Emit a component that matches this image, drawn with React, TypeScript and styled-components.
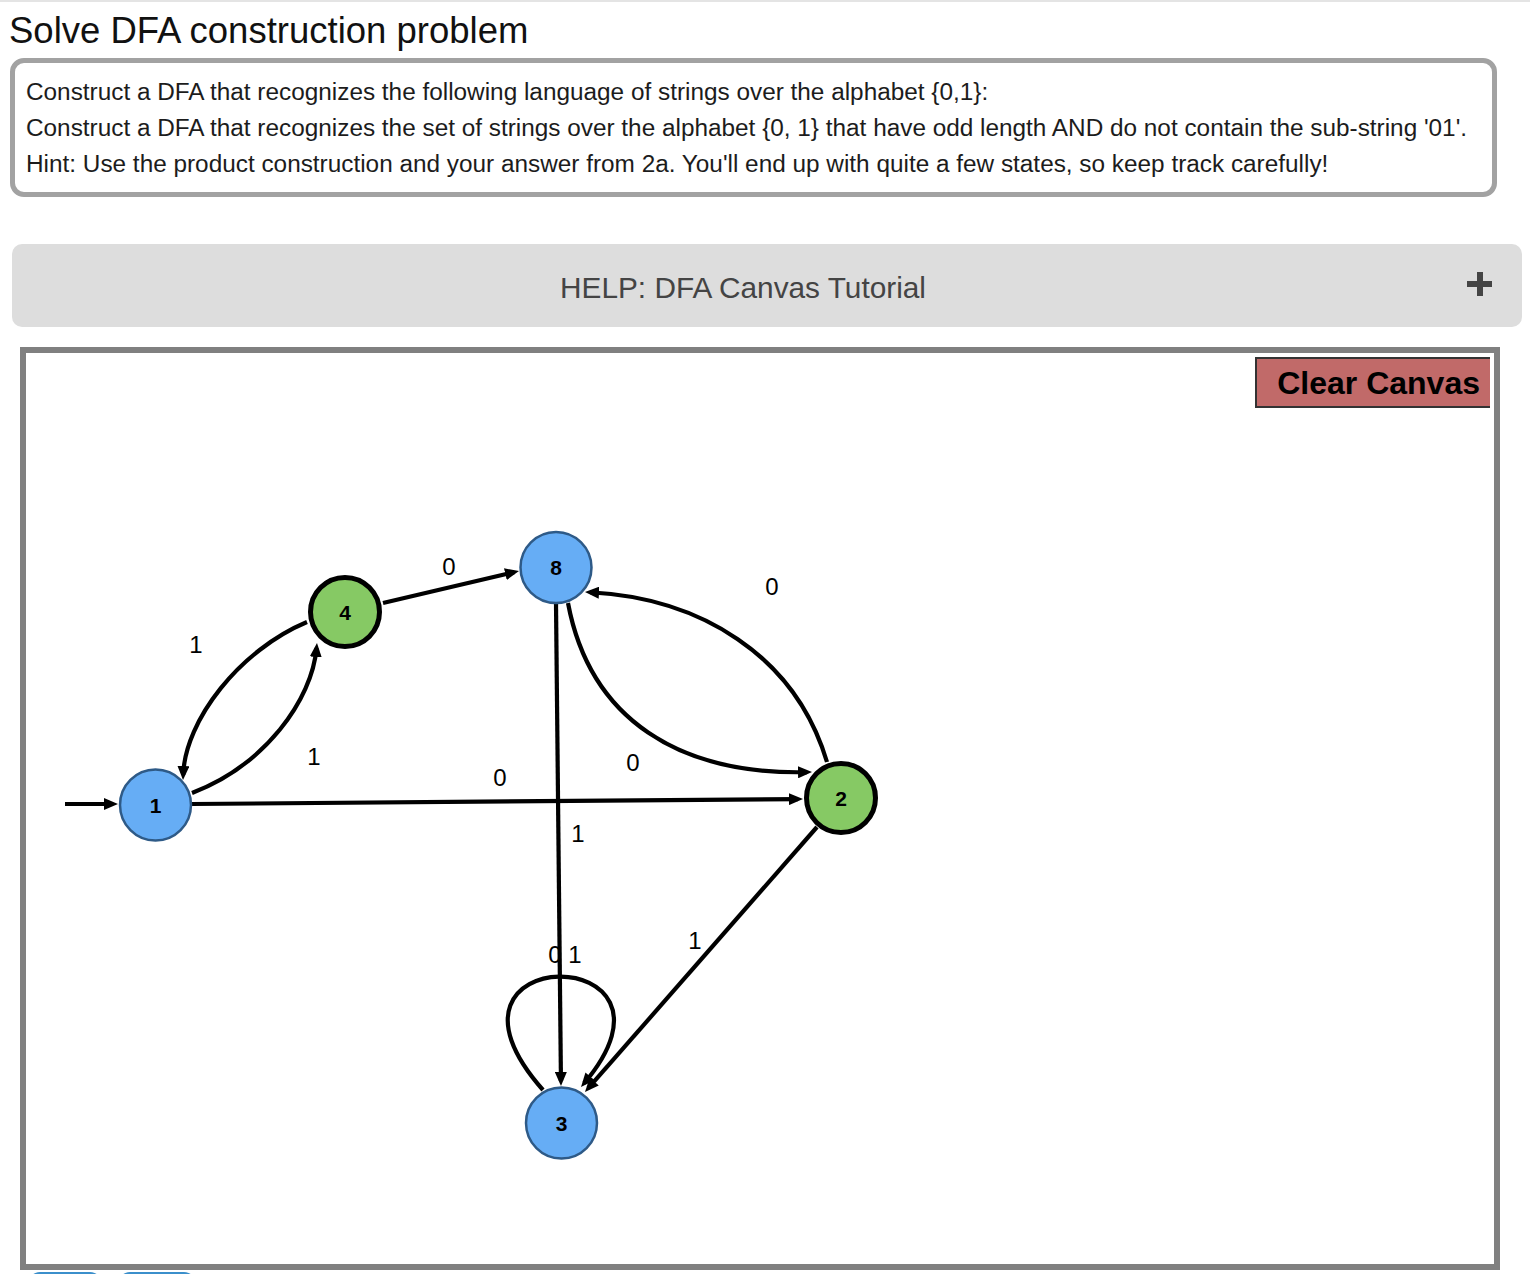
import React from 'react';
import styled, { createGlobalStyle } from 'styled-components';

const GlobalStyle = createGlobalStyle`
  html, body { margin: 0; padding: 0; background: #fff; }
  body { font-family: "Liberation Sans", Arial, Helvetica, sans-serif; color: #1a1a1a; }
`;

const Page = styled.div`
  width: 1530px;
  border-top: 2px solid #e4e4e4;
  box-sizing: border-box;
`;

const Title = styled.h2`
  margin: 8px 0 0 9px;
  font-size: 36.5px;
  font-weight: normal;
  line-height: 41px;
  color: #111;
`;

const ProblemBox = styled.div`
  margin: 7px 33px 0 10px;
  border: 5px solid #a2a2a2;
  border-radius: 14px;
  padding: 11px 12px 10px 11px;
  font-size: 24.35px;
  line-height: 36px;
  color: #1c1c1c;
`;

const ProblemLine = styled.div`
  white-space: nowrap;
`;

const HelpBar = styled.div`
  margin: 47px 8px 0 12px;
  height: 83px;
  background: #dddddd;
  border-radius: 10px;
  display: flex;
  align-items: center;
  padding-left: 7px;
`;

const HelpTitle = styled.div`
  flex: 1;
  text-align: center;
  font-size: 29.8px;
  margin-top: 5px;
  color: #444;
`;

const PlusIcon = styled.span`
  position: relative;
  width: 25px;
  height: 24px;
  margin: -3px 30px 0 0;
  &::before, &::after {
    content: '';
    position: absolute;
    background: #444;
  }
  &::before { left: 0; right: 0; top: 9px; height: 6px; }
  &::after { top: 0; bottom: 0; left: 10px; width: 6px; }
`;

const Canvas = styled.div`
  position: relative;
  margin: 20px 30px 0 20px;
  height: 923px;
  box-sizing: border-box;
  border: 6px solid #808080;
  background: #fff;
`;

const Drawing = styled.svg`
  display: block;
  width: 100%;
  height: 100%;
`;

const ClearButton = styled.button`
  position: absolute;
  top: 4px;
  right: 4px;
  height: 51px;
  box-sizing: border-box;
  border: 2px solid #333;
  border-right: none;
  background: #c16a69;
  color: #000;
  font-family: "Liberation Sans", Arial, sans-serif;
  font-weight: bold;
  font-size: 32px;
  padding: 0 10px 0 20px;
  line-height: 1;
`;

const ButtonRow = styled.div`
  display: flex;
  gap: 16px;
  margin: 2px 0 0 28px;
`;

const SmallButton = styled.button<{ $w: number }>`
  width: ${(p) => p.$w}px;
  height: 40px;
  border: none;
  border-radius: 12px;
  background: #3b8fcb;
`;

const EdgePath = styled.path`
  fill: none;
  stroke: #000;
  stroke-width: 4.2;
`;

const StateCircle = styled.circle<{ $accept: boolean }>`
  fill: ${(p) => (p.$accept ? '#86c964' : '#66adf5')};
  stroke: ${(p) => (p.$accept ? '#000' : '#2e5a87')};
  stroke-width: ${(p) => (p.$accept ? 5 : 2.5)};
`;

const StateLabel = styled.text`
  font-family: "Liberation Sans", Arial, sans-serif;
  font-weight: bold;
  font-size: 21px;
  fill: #000;
`;

const EdgeLabel = styled.text`
  font-family: "Liberation Sans", Arial, sans-serif;
  font-size: 24px;
  fill: #000;
`;

type Pt = [number, number];

const shorten = (end: Pt, from: Pt, d: number): Pt => {
  const dx = end[0] - from[0];
  const dy = end[1] - from[1];
  const L = Math.hypot(dx, dy);
  return [end[0] - (dx / L) * d, end[1] - (dy / L) * d];
};

const edgePath = (pts: Pt[], arrow: boolean): string => {
  const last = pts[pts.length - 1];
  const prev = pts[pts.length - 2];
  const end = arrow ? shorten(last, prev, 5) : last;
  const p = [...pts.slice(0, -1), end];
  if (p.length === 2) return `M${p[0][0]},${p[0][1]} L${p[1][0]},${p[1][1]}`;
  return `M${p[0][0]},${p[0][1]} C${p[1][0]},${p[1][1]} ${p[2][0]},${p[2][1]} ${p[3][0]},${p[3][1]}`;
};

const edges: Pt[][] = [
  [[65, 804], [118, 804]],
  [[192, 804], [803, 799]],
  [[383, 603], [519, 571]],
  [[556, 604], [561, 1086]],
  [[817, 827], [585, 1092]],
  [[307, 622], [240, 650], [185, 720], [183, 780]],
  [[192, 793], [265, 765], [312, 700], [317, 643]],
  [[568, 603], [590, 720], [680, 775], [812, 772]],
  [[827, 762], [795, 655], [700, 598], [585, 592]],
  [[543, 1090], [410, 940], [705, 940], [581, 1087]],
];

const labels: { x: number; y: number; t: string }[] = [
  { x: 449, y: 566, t: '0' },
  { x: 500, y: 777, t: '0' },
  { x: 314, y: 756, t: '1' },
  { x: 196, y: 644, t: '1' },
  { x: 633, y: 762, t: '0' },
  { x: 772, y: 586, t: '0' },
  { x: 578, y: 833, t: '1' },
  { x: 695, y: 940, t: '1' },
  { x: 565, y: 954, t: '0 1' },
];

const states: { id: string; x: number; y: number; accept: boolean }[] = [
  { id: '1', x: 155.5, y: 805, accept: false },
  { id: '4', x: 345, y: 612, accept: true },
  { id: '8', x: 556, y: 567.5, accept: false },
  { id: '2', x: 841, y: 798, accept: true },
  { id: '3', x: 561.5, y: 1123, accept: false },
];

export default function App() {
  return (
    <Page>
      <GlobalStyle />
      <Title>Solve DFA construction problem</Title>
      <ProblemBox>
        <ProblemLine>Construct a DFA that recognizes the following language of strings over the alphabet {'{0,1}'}:</ProblemLine>
        <ProblemLine>
          Construct a DFA that recognizes the set of strings over the alphabet {'{0, 1}'} that have odd length AND do not contain the sub-string '01'.
        </ProblemLine>
        <ProblemLine>
          Hint: Use the product construction and your answer from 2a. You'll end up with quite a few states, so keep track carefully!
        </ProblemLine>
      </ProblemBox>
      <HelpBar>
        <HelpTitle>HELP: DFA Canvas Tutorial</HelpTitle>
        <PlusIcon />
      </HelpBar>
      <Canvas>
        <Drawing viewBox="26 353 1468 911">
          <defs>
            <marker id="arrow" markerWidth="14" markerHeight="12" refX="9" refY="6" orient="auto" markerUnits="userSpaceOnUse">
              <path d="M0,0 L14,6 L0,12 z" fill="#000" />
            </marker>
          </defs>
          {edges.map((pts, i) => (
            <EdgePath key={i} d={edgePath(pts, true)} markerEnd="url(#arrow)" />
          ))}
          {labels.map((l, i) => (
            <EdgeLabel key={i} x={l.x} y={l.y + 8.5} textAnchor="middle">
              {l.t}
            </EdgeLabel>
          ))}
          {states.map((s) => (
            <g key={s.id}>
              <StateCircle cx={s.x} cy={s.y} r={s.accept ? 34.5 : 35.5} $accept={s.accept} />
              <StateLabel x={s.x} y={s.y + 7.5} textAnchor="middle">
                {s.id}
              </StateLabel>
            </g>
          ))}
        </Drawing>
        <ClearButton>Clear Canvas</ClearButton>
      </Canvas>
      <ButtonRow>
        <SmallButton $w={74} aria-label="Submit" />
        <SmallButton $w={78} aria-label="Reset" />
      </ButtonRow>
    </Page>
  );
}
